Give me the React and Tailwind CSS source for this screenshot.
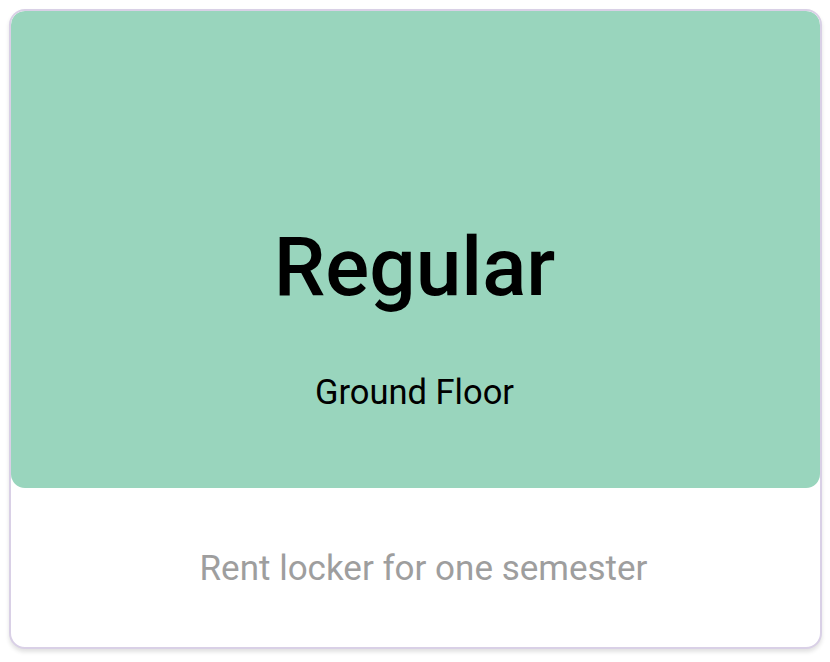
export default function App() {
  return (
    <div className="min-h-screen bg-white p-[9px] font-['Roboto',sans-serif]">
      <div className="w-[813px] h-[640px] rounded-[16px] border-2 border-[#d9d0e6] bg-white shadow-[0_3px_4px_rgba(0,0,0,0.12)] flex flex-col overflow-hidden">
        <div className="h-[477px] rounded-[14px] bg-[#99d5bd] flex flex-col items-center pt-[215px] pr-[2px]">
          <h1 className="text-[82px] leading-none font-medium text-black">Regular</h1>
          <p className="mt-[67px] text-[34.5px] leading-none text-black">Ground Floor</p>
        </div>
        <div className="flex-1 flex items-center justify-center pt-[2px] pl-[16px]">
          <p className="text-[35px] leading-none text-[#9e9e9e]">Rent locker for one semester</p>
        </div>
      </div>
    </div>
  );
}
